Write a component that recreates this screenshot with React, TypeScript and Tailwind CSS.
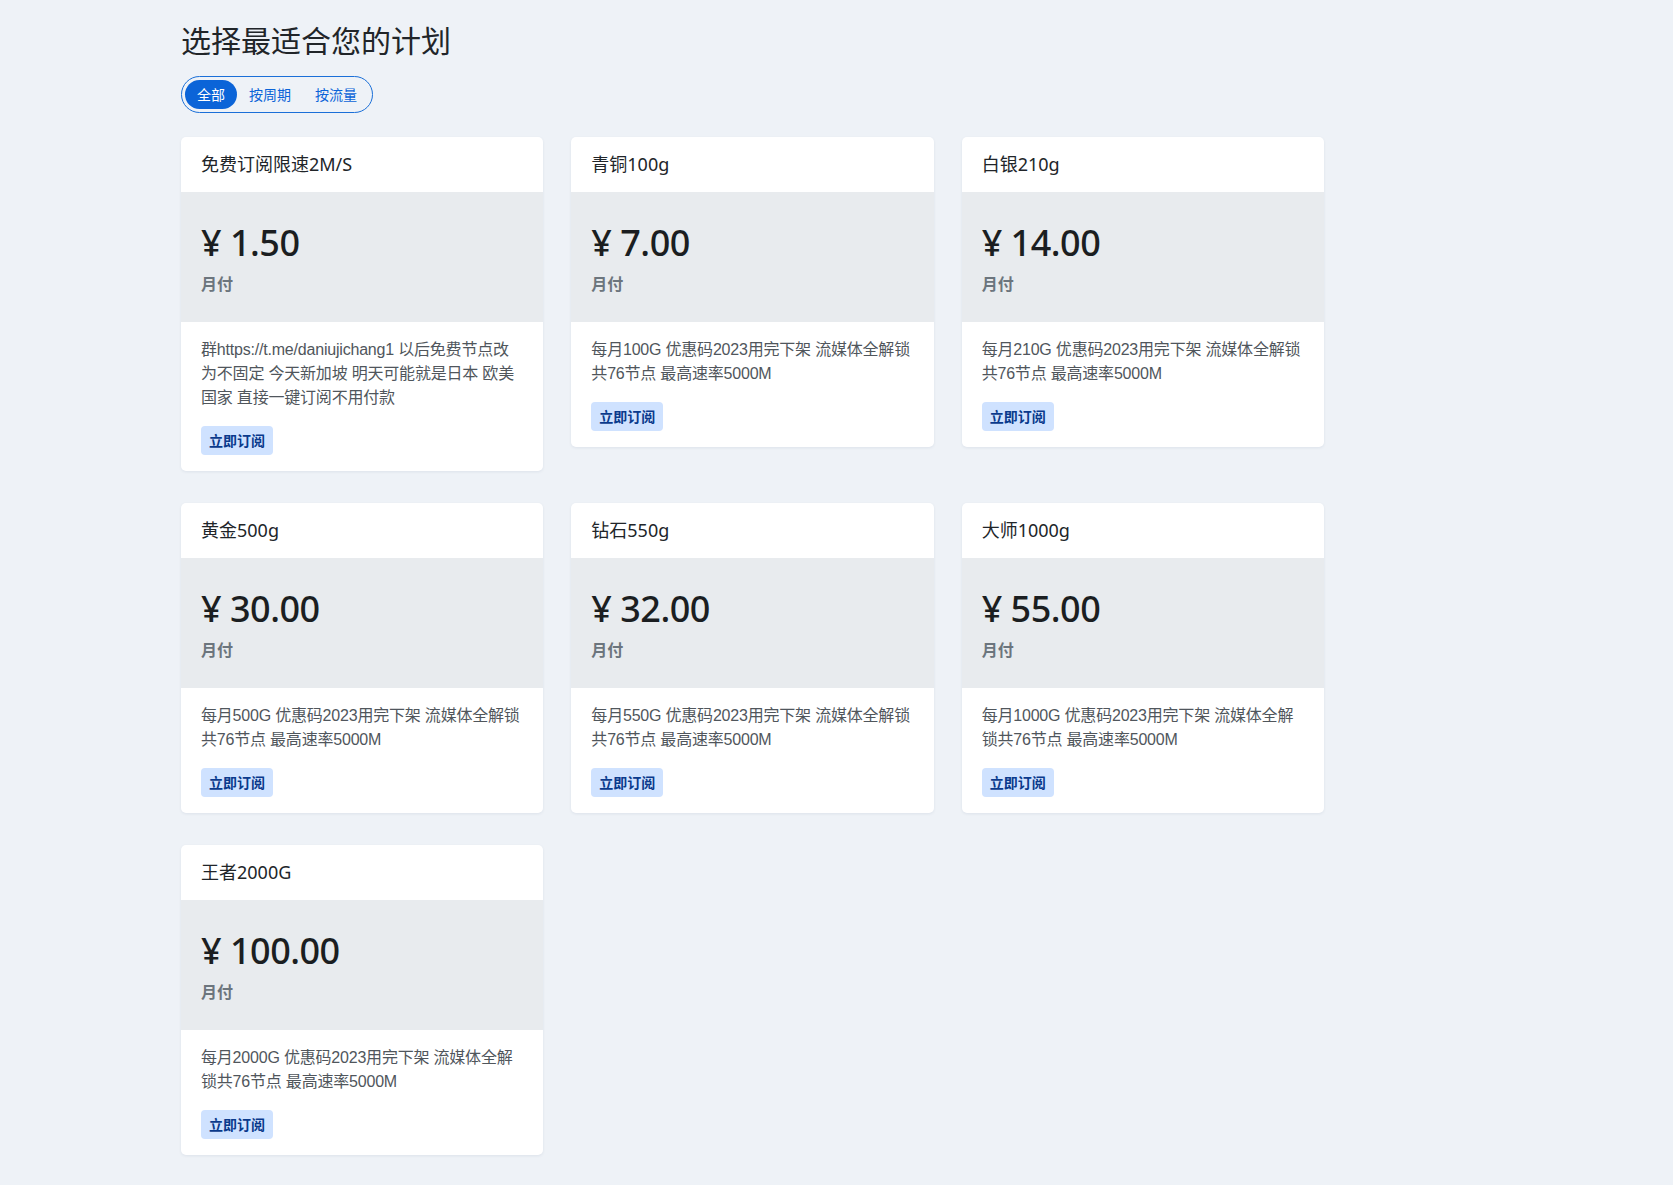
import React from "react";

type Plan = { name: string; price: string; desc: string };

const plans: Plan[] = [
  {
    name: "免费订阅限速2M/S",
    price: "1.50",
    desc: "群https://t.me/daniujichang1 以后免费节点改为不固定 今天新加坡 明天可能就是日本 欧美国家 直接一键订阅不用付款",
  },
  { name: "青铜100g", price: "7.00", desc: "每月100G 优惠码2023用完下架 流媒体全解锁共76节点 最高速率5000M" },
  { name: "白银210g", price: "14.00", desc: "每月210G 优惠码2023用完下架 流媒体全解锁共76节点 最高速率5000M" },
  { name: "黄金500g", price: "30.00", desc: "每月500G 优惠码2023用完下架 流媒体全解锁共76节点 最高速率5000M" },
  { name: "钻石550g", price: "32.00", desc: "每月550G 优惠码2023用完下架 流媒体全解锁共76节点 最高速率5000M" },
  { name: "大师1000g", price: "55.00", desc: "每月1000G 优惠码2023用完下架 流媒体全解锁共76节点 最高速率5000M" },
  { name: "王者2000G", price: "100.00", desc: "每月2000G 优惠码2023用完下架 流媒体全解锁共76节点 最高速率5000M" },
];

function PlanCard({ plan }: { plan: Plan }) {
  return (
    <div className="bg-white rounded-[5px] shadow-[0_1px_3px_rgba(30,50,90,0.08)] overflow-hidden">
      <div className="h-[55px] flex items-center px-5 text-[18px] text-[#212529]">{plan.name}</div>
      <div className="bg-[#e8ebee] px-5 pt-[27px] pb-[26px]">
        <div className="text-[36px] leading-[48px] font-medium tracking-[-0.5px] text-[#1b1e21] mb-[5px]">
          ¥ {plan.price}
        </div>
        <div className="text-[16px] leading-6 font-bold text-[#6c757d]">月付</div>
      </div>
      <div className="px-5 pt-4 pb-4">
        <p
          className="text-[16px] leading-6 text-[#50565c] break-all tracking-[-0.2px]"
          style={{ fontFamily: '"Liberation Sans", "Noto Sans CJK SC", sans-serif' }}
        >
          {plan.desc}
        </p>
        <button className="mt-4 h-[29px] px-2 rounded-[4px] bg-[#cfe2ff] text-[14px] font-bold text-[#0a3a8c]">
          立即订阅
        </button>
      </div>
    </div>
  );
}

export default function App() {
  return (
    <div
      className="min-h-screen bg-[#eef2f7] pl-[181px] pt-[23px] pb-10"
      style={{ fontFamily: '"Noto Sans", "Noto Sans CJK SC", sans-serif' }}
    >
      <h1 className="text-[30px] leading-9 text-[#212529] mb-[17px]">选择最适合您的计划</h1>
      <div className="inline-flex items-center border border-[#1a6fd8] rounded-full p-[3px] mb-6">
        <button className="h-[29px] px-3 rounded-full bg-[#0b64d8] text-white text-[14px]">全部</button>
        <button className="h-[29px] px-3 rounded-full text-[#0b64d8] text-[14px]">按周期</button>
        <button className="h-[29px] px-3 rounded-full text-[#0b64d8] text-[14px]">按流量</button>
      </div>
      <div className="grid grid-cols-3 w-[1143px] gap-x-7 gap-y-8 items-start">
        {plans.map((p) => (
          <PlanCard key={p.name} plan={p} />
        ))}
      </div>
    </div>
  );
}
